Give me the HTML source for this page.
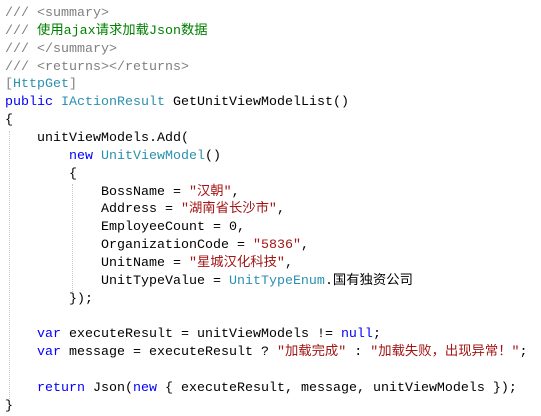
<!DOCTYPE html>
<html><head><meta charset="utf-8"><style>
html,body{margin:0;padding:0;background:#fff;width:541px;height:415px;overflow:hidden}
pre{margin:0;position:absolute;left:5px;top:5px;font-family:"Liberation Mono","Noto Sans CJK SC",monospace;font-size:13.33px;line-height:17.86px;color:#000}
.c{color:#808080}.g{color:#008000}.t{color:#2b91af}.k{color:#0000ff}.s{color:#a31515}
.guide{position:absolute;width:0;border-left:1px dotted #c8c8c8}
</style></head><body>
<div class="guide" style="left:9px;top:131px;height:268px"></div>
<div class="guide" style="left:72px;top:184px;height:108px"></div>
<pre><span class="c">/// &lt;summary&gt;</span>
<span class="c">///</span> <span class="g">使用ajax请求加载Json数据</span>
<span class="c">/// &lt;/summary&gt;</span>
<span class="c">/// &lt;returns&gt;&lt;/returns&gt;</span>
<span class="c">[</span><span class="t">HttpGet</span><span class="c">]</span>
<span class="k">public</span> <span class="t">IActionResult</span> GetUnitViewModelList()
{
    unitViewModels.Add(
        <span class="k">new</span> <span class="t">UnitViewModel</span>()
        {
            BossName = <span class="s">"汉朝"</span>,
            Address = <span class="s">"湖南省长沙市"</span>,
            EmployeeCount = 0,
            OrganizationCode = <span class="s">"5836"</span>,
            UnitName = <span class="s">"星城汉化科技"</span>,
            UnitTypeValue = <span class="t">UnitTypeEnum</span>.国有独资公司
        });

    <span class="k">var</span> executeResult = unitViewModels != <span class="k">null</span>;
    <span class="k">var</span> message = executeResult ? <span class="s">"加载完成"</span> : <span class="s">"加载失败，出现异常！"</span>;

    <span class="k">return</span> Json(<span class="k">new</span> { executeResult, message, unitViewModels });
}</pre>
</body></html>
